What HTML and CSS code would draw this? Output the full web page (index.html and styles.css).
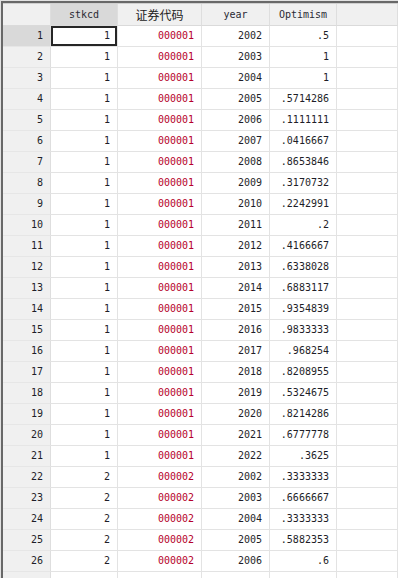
FILE: index.html
```html
<!DOCTYPE html>
<html lang="zh">
<head>
<meta charset="utf-8">
<title>Data Browser</title>
<link rel="stylesheet" href="styles.css">
</head>
<body>
<div class="frame">
  <div class="panel">
    <div class="table">
      <div class="row head">
        <div class="cell corner"></div>
        <div class="cell hsel">stkcd</div>
        <div class="cell cjk">证券代码</div>
        <div class="cell">year</div>
        <div class="cell">Optimism</div>
        <div class="cell"></div>
      </div>
      <div class="row"><div class="cell num nsel">1</div><div class="cell sel">1</div><div class="cell str">000001</div><div class="cell">2002</div><div class="cell">.5</div><div class="cell"></div></div>
      <div class="row"><div class="cell num">2</div><div class="cell">1</div><div class="cell str">000001</div><div class="cell">2003</div><div class="cell">1</div><div class="cell"></div></div>
      <div class="row"><div class="cell num">3</div><div class="cell">1</div><div class="cell str">000001</div><div class="cell">2004</div><div class="cell">1</div><div class="cell"></div></div>
      <div class="row"><div class="cell num">4</div><div class="cell">1</div><div class="cell str">000001</div><div class="cell">2005</div><div class="cell">.5714286</div><div class="cell"></div></div>
      <div class="row"><div class="cell num">5</div><div class="cell">1</div><div class="cell str">000001</div><div class="cell">2006</div><div class="cell">.1111111</div><div class="cell"></div></div>
      <div class="row"><div class="cell num">6</div><div class="cell">1</div><div class="cell str">000001</div><div class="cell">2007</div><div class="cell">.0416667</div><div class="cell"></div></div>
      <div class="row"><div class="cell num">7</div><div class="cell">1</div><div class="cell str">000001</div><div class="cell">2008</div><div class="cell">.8653846</div><div class="cell"></div></div>
      <div class="row"><div class="cell num">8</div><div class="cell">1</div><div class="cell str">000001</div><div class="cell">2009</div><div class="cell">.3170732</div><div class="cell"></div></div>
      <div class="row"><div class="cell num">9</div><div class="cell">1</div><div class="cell str">000001</div><div class="cell">2010</div><div class="cell">.2242991</div><div class="cell"></div></div>
      <div class="row"><div class="cell num">10</div><div class="cell">1</div><div class="cell str">000001</div><div class="cell">2011</div><div class="cell">.2</div><div class="cell"></div></div>
      <div class="row"><div class="cell num">11</div><div class="cell">1</div><div class="cell str">000001</div><div class="cell">2012</div><div class="cell">.4166667</div><div class="cell"></div></div>
      <div class="row"><div class="cell num">12</div><div class="cell">1</div><div class="cell str">000001</div><div class="cell">2013</div><div class="cell">.6338028</div><div class="cell"></div></div>
      <div class="row"><div class="cell num">13</div><div class="cell">1</div><div class="cell str">000001</div><div class="cell">2014</div><div class="cell">.6883117</div><div class="cell"></div></div>
      <div class="row"><div class="cell num">14</div><div class="cell">1</div><div class="cell str">000001</div><div class="cell">2015</div><div class="cell">.9354839</div><div class="cell"></div></div>
      <div class="row"><div class="cell num">15</div><div class="cell">1</div><div class="cell str">000001</div><div class="cell">2016</div><div class="cell">.9833333</div><div class="cell"></div></div>
      <div class="row"><div class="cell num">16</div><div class="cell">1</div><div class="cell str">000001</div><div class="cell">2017</div><div class="cell">.968254</div><div class="cell"></div></div>
      <div class="row"><div class="cell num">17</div><div class="cell">1</div><div class="cell str">000001</div><div class="cell">2018</div><div class="cell">.8208955</div><div class="cell"></div></div>
      <div class="row"><div class="cell num">18</div><div class="cell">1</div><div class="cell str">000001</div><div class="cell">2019</div><div class="cell">.5324675</div><div class="cell"></div></div>
      <div class="row"><div class="cell num">19</div><div class="cell">1</div><div class="cell str">000001</div><div class="cell">2020</div><div class="cell">.8214286</div><div class="cell"></div></div>
      <div class="row"><div class="cell num">20</div><div class="cell">1</div><div class="cell str">000001</div><div class="cell">2021</div><div class="cell">.6777778</div><div class="cell"></div></div>
      <div class="row"><div class="cell num">21</div><div class="cell">1</div><div class="cell str">000001</div><div class="cell">2022</div><div class="cell">.3625</div><div class="cell"></div></div>
      <div class="row"><div class="cell num">22</div><div class="cell">2</div><div class="cell str">000002</div><div class="cell">2002</div><div class="cell">.3333333</div><div class="cell"></div></div>
      <div class="row"><div class="cell num">23</div><div class="cell">2</div><div class="cell str">000002</div><div class="cell">2003</div><div class="cell">.6666667</div><div class="cell"></div></div>
      <div class="row"><div class="cell num">24</div><div class="cell">2</div><div class="cell str">000002</div><div class="cell">2004</div><div class="cell">.3333333</div><div class="cell"></div></div>
      <div class="row"><div class="cell num">25</div><div class="cell">2</div><div class="cell str">000002</div><div class="cell">2005</div><div class="cell">.5882353</div><div class="cell"></div></div>
      <div class="row"><div class="cell num">26</div><div class="cell">2</div><div class="cell str">000002</div><div class="cell">2006</div><div class="cell">.6</div><div class="cell"></div></div>
      <div class="row"><div class="cell num"></div><div class="cell"></div><div class="cell"></div><div class="cell"></div><div class="cell"></div><div class="cell"></div></div>
    </div>
  </div>
</div>
</body>
</html>
```

FILE: styles.css
```css
html, body {
  margin: 0;
  padding: 0;
  background: #ffffff;
  overflow: hidden;
}

.frame {
  width: 398px;
  height: 578px;
  overflow: hidden;
  box-sizing: border-box;
  border-top: 1px solid #e2e2e2;
  border-left: 1px solid #e2e2e2;
}

.panel {
  border-top: 2px solid #686868;
  border-left: 2px solid #686868;
}

.table {
  border-top: 1px solid #cfcfcf;
  font-family: "DejaVu Sans Mono", "Liberation Mono", monospace;
  font-size: 10px;
  color: #1e1e28;
}

.row {
  display: grid;
  grid-template-columns: 48px 67px 84px 68px 67px 61px;
}

.cell {
  box-sizing: border-box;
  height: 21px;
  line-height: 20px;
  border-right: 1px solid #e3e3e3;
  border-bottom: 1px solid #e3e3e3;
  padding-right: 7px;
  text-align: right;
  white-space: nowrap;
  overflow: hidden;
  background: #ffffff;
}

.head .cell {
  height: 22px;
  line-height: 21px;
  background: #f0f0f0;
  text-align: center;
  padding-right: 0;
  color: #2a2a34;
  border-bottom-color: #dadada;
  border-right-color: #dedede;
}

.head .hsel {
  background: #d9d9d9;
}

.head .cjk {
  font-family: "Noto Sans CJK SC", "Noto Sans", sans-serif;
  font-size: 12px;
  color: #222222;
}

.num {
  background: #f0f0f0;
  border-right-color: #dedede;
  border-bottom-color: #e6e6e6;
}

.nsel {
  background: #d9d9d9;
}

.sel {
  box-shadow: inset 0 0 0 2px #262626;
}

.str {
  color: #b5002a;
}
```
